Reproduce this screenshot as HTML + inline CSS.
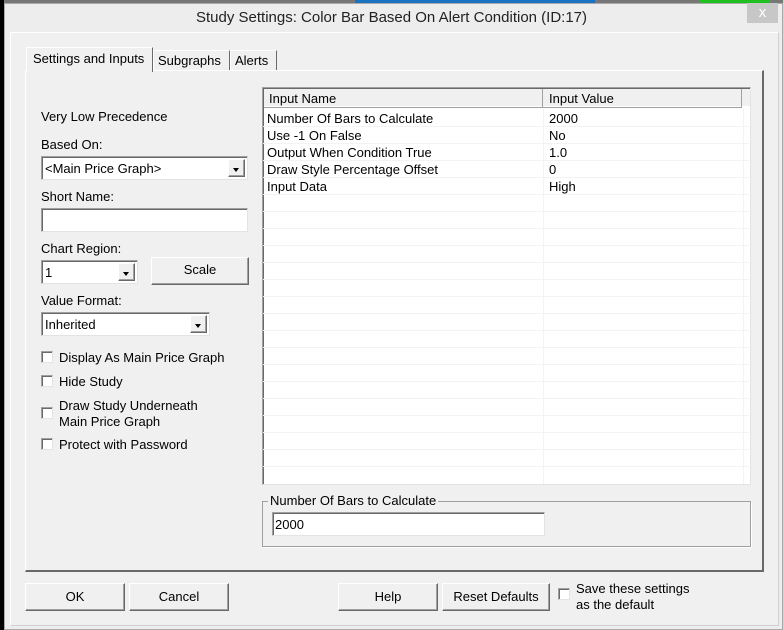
<!DOCTYPE html>
<html><head><style>
*{box-sizing:border-box;margin:0;padding:0}
body{width:783px;height:630px;overflow:hidden;background:#f0f0f0;position:relative;font-family:"Liberation Sans",sans-serif;font-size:13px;color:#000}
.a{position:absolute}
.t{position:absolute;white-space:nowrap;line-height:15px}
.sunk{position:absolute;background:#fff;border:1px solid #a0a0a0;border-right-color:#e3e3e3;border-bottom-color:#e3e3e3;box-shadow:inset 1px 1px 0 #696969}
.btn{position:absolute;background:#f0f0f0;border:1px solid #fff;border-right-color:#696969;border-bottom-color:#696969;box-shadow:inset -1px -1px 0 #a0a0a0;text-align:center;font-size:13px}
.dd{position:absolute;top:2px;right:2px;width:17px;bottom:2px;background:#f0f0f0;border:1px solid #fff;border-right-color:#696969;border-bottom-color:#696969;box-shadow:inset -1px -1px 0 #a0a0a0}
.dd:after{content:"";position:absolute;left:4px;top:8px;border-left:3.5px solid transparent;border-right:3.5px solid transparent;border-top:4px solid #000}
.cb{position:absolute;width:12px;height:12px;background:#fff;border:1px solid #a0a0a0;border-right-color:#e3e3e3;border-bottom-color:#e3e3e3;box-shadow:inset 1px 1px 0 #696969}
.row{position:absolute;left:0;width:486px;height:17px;border-bottom:1px solid #f3f3f3}
</style></head><body>
<div class="a" style="left:0;top:0;width:783px;height:3px;background:#777"></div>
<div class="a" style="left:0;top:0;width:4px;height:630px;background:#000"></div>
<div class="a" style="left:355px;top:0;width:240px;height:3px;background:#1a73c0"></div>
<div class="a" style="left:700px;top:0;width:70px;height:3px;background:#1fc01f"></div>
<div class="a" style="left:4px;top:3px;width:779px;height:627px;background:#ededed;border:1px solid #aaa"></div>
<div class="t" style="left:0;width:783px;top:9px;text-align:center;font-size:15px;line-height:18px;color:#222">Study Settings: Color Bar Based On Alert Condition (ID:17)</div>
<div class="a" style="left:747px;top:3px;width:31px;height:20px;background:#c7c7c7;color:#fff;text-align:center;font-size:15px;line-height:20px">x</div>
<div class="a" style="left:10px;top:32px;width:769px;height:594px;background:#f0f0f0;border:1px solid #fff;border-right-color:#d0d0d0;border-bottom-color:#d0d0d0"></div>
<div class="a" style="left:25px;top:70px;width:739px;height:502px;border:1px solid #fff;border-right:2px solid #696969;border-bottom:2px solid #696969;background:#f0f0f0"></div>
<div class="a" style="left:26px;top:47px;width:127px;height:25px;background:#f0f0f0;border:1px solid #fff;border-right:1px solid #696969;border-bottom:none"></div>
<div class="t" style="left:33px;top:51px">Settings and Inputs</div>
<div class="a" style="left:153px;top:50px;width:77px;height:20px;border:1px solid #fff;border-right:1px solid #696969;border-bottom:none"></div>
<div class="t" style="left:158px;top:53px">Subgraphs</div>
<div class="a" style="left:230px;top:50px;width:47px;height:20px;border:1px solid #fff;border-right:1px solid #696969;border-bottom:none"></div>
<div class="t" style="left:235px;top:53px">Alerts</div>
<div class="t" style="left:41px;top:109px">Very Low Precedence</div>
<div class="t" style="left:41px;top:137px">Based On:</div>
<div class="sunk" style="left:41px;top:156px;width:207px;height:24px"><div class="t" style="left:3px;top:4px">&lt;Main Price Graph&gt;</div><div class="dd"></div></div>
<div class="t" style="left:41px;top:189px">Short Name:</div>
<div class="sunk" style="left:41px;top:208px;width:207px;height:24px"></div>
<div class="t" style="left:41px;top:241px">Chart Region:</div>
<div class="sunk" style="left:41px;top:260px;width:97px;height:24px"><div class="t" style="left:3px;top:4px">1</div><div class="dd"></div></div>
<div class="btn" style="left:151px;top:257px;width:98px;height:28px;line-height:24px">Scale</div>
<div class="t" style="left:41px;top:293px">Value Format:</div>
<div class="sunk" style="left:41px;top:312px;width:169px;height:24px"><div class="t" style="left:3px;top:4px">Inherited</div><div class="dd"></div></div>
<div class="cb" style="left:41px;top:351px"></div><div class="t" style="left:59px;top:350px">Display As Main Price Graph</div>
<div class="cb" style="left:41px;top:375px"></div><div class="t" style="left:59px;top:374px">Hide Study</div>
<div class="cb" style="left:41px;top:407px"></div><div class="t" style="left:59px;top:398px">Draw Study Underneath</div><div class="t" style="left:59px;top:414px">Main Price Graph</div>
<div class="cb" style="left:41px;top:438px"></div><div class="t" style="left:59px;top:437px">Protect with Password</div>
<div class="sunk" style="left:262px;top:87px;width:489px;height:398px;overflow:hidden">
 <div class="a" style="left:1px;top:1px;width:486px;height:19px;background:#f0f0f0;border-bottom:2px solid #fff"></div>
 <div class="a" style="left:1px;top:1px;width:478px;height:19px;border-bottom:1px solid #a0a0a0;border-right:1px solid #a0a0a0"></div>
 <div class="a" style="left:279px;top:1px;width:1px;height:18px;background:#a0a0a0"></div>
 <div class="t" style="left:6px;top:3px">Input Name</div>
 <div class="t" style="left:286px;top:3px">Input Value</div>
 <div class="a" style="left:280px;top:21px;width:1px;height:380px;background:#f3f3f3"></div>
 <div class="a" style="left:480px;top:21px;width:1px;height:380px;background:#f3f3f3"></div>
 <div class="row" style="top:22px"></div><div class="row" style="top:39px"></div><div class="row" style="top:56px"></div><div class="row" style="top:73px"></div><div class="row" style="top:90px"></div><div class="row" style="top:107px"></div><div class="row" style="top:124px"></div><div class="row" style="top:141px"></div><div class="row" style="top:158px"></div><div class="row" style="top:175px"></div><div class="row" style="top:192px"></div><div class="row" style="top:209px"></div><div class="row" style="top:226px"></div><div class="row" style="top:243px"></div><div class="row" style="top:260px"></div><div class="row" style="top:277px"></div><div class="row" style="top:294px"></div><div class="row" style="top:311px"></div><div class="row" style="top:328px"></div><div class="row" style="top:345px"></div><div class="row" style="top:362px"></div>
 <div class="t" style="left:4px;top:23px">Number Of Bars to Calculate</div><div class="t" style="left:286px;top:23px">2000</div>
 <div class="t" style="left:4px;top:40px">Use -1 On False</div><div class="t" style="left:286px;top:40px">No</div>
 <div class="t" style="left:4px;top:57px">Output When Condition True</div><div class="t" style="left:286px;top:57px">1.0</div>
 <div class="t" style="left:4px;top:74px">Draw Style Percentage Offset</div><div class="t" style="left:286px;top:74px">0</div>
 <div class="t" style="left:4px;top:91px">Input Data</div><div class="t" style="left:286px;top:91px">High</div>
</div>
<div class="a" style="left:262px;top:501px;width:489px;height:46px;border:1px solid #a0a0a0;box-shadow:1px 1px 0 #fff"></div>
<div class="t" style="left:268px;top:493px;background:#f0f0f0;padding:0 2px">Number Of Bars to Calculate</div>
<div class="sunk" style="left:272px;top:512px;width:273px;height:24px"><div class="t" style="left:2px;top:4px">2000</div></div>
<div class="btn" style="left:25px;top:583px;width:100px;height:28px;line-height:26px">OK</div>
<div class="btn" style="left:129px;top:583px;width:100px;height:28px;line-height:26px">Cancel</div>
<div class="btn" style="left:338px;top:583px;width:100px;height:28px;line-height:26px">Help</div>
<div class="btn" style="left:442px;top:583px;width:108px;height:28px;line-height:26px">Reset Defaults</div>
<div class="cb" style="left:558px;top:588px"></div>
<div class="t" style="left:576px;top:581px">Save these settings</div>
<div class="t" style="left:576px;top:597px">as the default</div>
</body></html>
